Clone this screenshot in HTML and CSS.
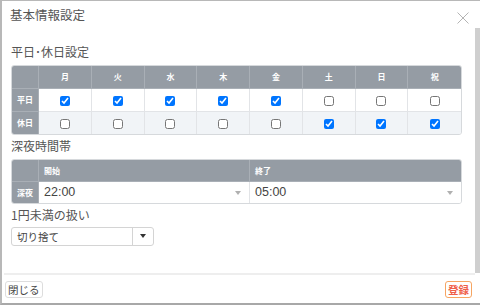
FILE: index.html
```html
<!DOCTYPE html>
<html lang="ja">
<head>
  <meta charset="UTF-8">
  <title>基本情報設定</title>
  <link rel="stylesheet" href="styles.css">
</head>
<body>
  <div class="dialog">
    <div class="dialog-head">
      <span class="dialog-title">基本情報設定</span>
      <svg class="close" width="12" height="12" viewBox="0 0 12 12">
        <path d="M0.5 0.5 L11.5 11.5 M11.5 0.5 L0.5 11.5" stroke="#b4b4b4" stroke-width="1" fill="none"/>
      </svg>
    </div>

    <div class="dialog-main">
      <div class="content">
        <p class="label first">平日･休日設定</p>
        <table class="grid week">
          <tr>
            <th class="corner"></th>
            <th>月</th><th>火</th><th>水</th><th>木</th><th>金</th><th>土</th><th>日</th><th>祝</th>
          </tr>
          <tr>
            <th class="side">平日</th>
            <td><input type="checkbox" checked></td>
            <td><input type="checkbox" checked></td>
            <td><input type="checkbox" checked></td>
            <td><input type="checkbox" checked></td>
            <td><input type="checkbox" checked></td>
            <td><input type="checkbox"></td>
            <td><input type="checkbox"></td>
            <td><input type="checkbox"></td>
          </tr>
          <tr class="alt">
            <th class="side">休日</th>
            <td><input type="checkbox"></td>
            <td><input type="checkbox"></td>
            <td><input type="checkbox"></td>
            <td><input type="checkbox"></td>
            <td><input type="checkbox"></td>
            <td><input type="checkbox" checked></td>
            <td><input type="checkbox" checked></td>
            <td><input type="checkbox" checked></td>
          </tr>
        </table>

        <p class="label">深夜時間帯</p>
        <table class="grid night">
          <tr>
            <th class="corner"></th>
            <th class="left">開始</th>
            <th class="left">終了</th>
          </tr>
          <tr>
            <th class="side">深夜</th>
            <td class="time"><span>22:00</span><i class="caret"></i></td>
            <td class="time"><span>05:00</span><i class="caret"></i></td>
          </tr>
        </table>

        <p class="label">1円未満の扱い</p>
        <div class="select">
          <span class="select-text">切り捨て</span>
          <span class="select-btn"><i class="caret dark"></i></span>
        </div>
      </div>
      <div class="scrollbar"></div>
    </div>

    <div class="dialog-foot">
      <button class="btn">閉じる</button>
      <button class="btn save">登録</button>
    </div>
  </div>
</body>
</html>
```

FILE: styles.css
```css
body {
  margin: 0;
  font-family: "Noto Sans CJK JP", "Noto Sans", sans-serif;
  color: #444;
  background: #fff;
}
.dialog {
  width: 480px;
  height: 305px;
  box-sizing: border-box;
  border-top: 1px solid #b8b8b8;
  border-left: 2px solid #b8b8b8;
  border-bottom: 2px solid #a8a8a8;
  display: flex;
  flex-direction: column;
}
.dialog-head {
  height: 27px;
  display: flex;
  align-items: center;
  justify-content: space-between;
  padding: 0 11px 0 8px;
  flex-shrink: 0;
}
.dialog-title {
  font-size: 12.5px;
  color: #555;
}
.close {
  margin-top: 6px;
}
.dialog-main {
  height: 245px;
  display: flex;
  flex-shrink: 0;
}
.content {
  flex: 1;
  padding: 0 12px 0 9px;
}
.scrollbar {
  width: 5px;
  background: #cfcfcf;
}
.label {
  margin: 0;
  font-size: 12px;
  line-height: 16px;
  color: #555;
  padding-top: 3px;
}
.label.first {
  padding-top: 16px;
}
.grid {
  border-collapse: separate;
  border-spacing: 0;
  width: 451px;
  table-layout: fixed;
  border: 1px solid #d6d9dc;
  border-radius: 3px;
  overflow: hidden;
  margin-top: 5px;
  font-size: 10px;
  line-height: 10px;
}
.grid th {
  background: #959ca4;
  color: #fff;
  font-size: 8px;
  line-height: 10px;
  font-weight: bold;
  height: 22px;
  padding: 0;
  border-right: 1px solid #a9afb6;
  border-bottom: 1px solid #a9afb6;
}
.grid th.corner,
.grid th.side {
  width: 26px;
}
.grid th.left {
  text-align: left;
  padding-left: 5px;
}
.grid td {
  height: 21px;
  padding: 0;
  text-align: center;
  border-right: 1px solid #e2e4e7;
  border-bottom: 1px solid #e2e4e7;
  background: #fff;
}
.grid tr:last-child td,
.grid tr:last-child th {
  border-bottom: none;
}
.grid tr td:last-child,
.grid tr th:last-child {
  border-right: none;
}
.grid .alt td {
  background: #f1f4f7;
}
.grid input {
  width: 10px;
  height: 10px;
  margin: 0;
  vertical-align: middle;
}
.night th {
  height: 21px;
}
.night td {
  height: 21px;
}
.time {
  text-align: left !important;
  padding: 0 5px !important;
  font-family: "Liberation Sans", Arial, sans-serif;
  font-size: 12.5px;
  line-height: 15px;
  color: #444;
  position: relative;
}
.caret {
  position: absolute;
  right: 8px;
  top: 9px;
  width: 0;
  height: 0;
  border-left: 3.5px solid transparent;
  border-right: 3.5px solid transparent;
  border-top: 4px solid #b0b0b0;
}
.select {
  margin-top: 4px;
  width: 143px;
  height: 19px;
  box-sizing: border-box;
  border: 1px solid #d4d4d4;
  border-radius: 3px;
  display: flex;
  align-items: center;
}
.select-text {
  flex: 1;
  font-size: 10.5px;
  padding-left: 5px;
  color: #444;
}
.select-btn {
  width: 20px;
  height: 100%;
  border-left: 1px solid #d4d4d4;
  position: relative;
}
.caret.dark {
  right: 7px;
  top: 6px;
  border-top-color: #333;
}
.dialog-foot {
  flex: 1;
  margin: 0 5px 0 2px;
  border-top: 2px solid #eee;
  display: flex;
  justify-content: space-between;
  align-items: center;
  padding: 0 2px 0 1px;
}
.btn {
  font-family: "Noto Sans CJK JP", sans-serif;
  font-size: 10.5px;
  height: 17px;
  padding: 0 2px;
  line-height: 15px;
  background: #fff;
  border: 1px solid #ddd;
  border-radius: 3px;
  color: #444;
}
.btn.save {
  border-color: #f6a562;
  color: #ef5f4a;
  font-weight: bold;
  margin-right: 1px;
}
```
